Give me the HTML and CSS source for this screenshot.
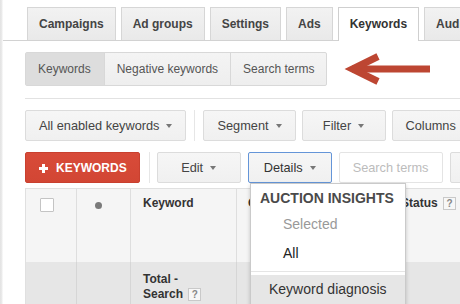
FILE: index.html
```html
<!DOCTYPE html>
<html>
<head>
<meta charset="utf-8">
<link rel="stylesheet" href="styles.css">
</head>
<body>
<div class="page">
  <div class="tabs">
    <div class="tab">Campaigns</div>
    <div class="tab">Ad groups</div>
    <div class="tab">Settings</div>
    <div class="tab">Ads</div>
    <div class="tab active">Keywords</div>
    <div class="tab">Audiences</div>
  </div>
  <div class="content">
    <div class="segmented">
      <div class="seg selected">Keywords</div>
      <div class="seg">Negative keywords</div>
      <div class="seg">Search terms</div>
    </div>
    <div class="rule"></div>
    <div class="toolbar">
      <div class="btn">All enabled keywords<span class="caret"></span></div>
      <div class="sep"></div>
      <div class="btn">Segment<span class="caret"></span></div>
      <div class="btn wide">Filter<span class="caret"></span></div>
      <div class="btn">Columns<span class="caret"></span></div>
    </div>
    <div class="toolbar row2">
      <div class="btn red"><svg class="plus" width="9" height="9" viewBox="0 0 9 9"><rect x="3" y="0" width="3" height="9" fill="#fff"/><rect x="0" y="3" width="9" height="3" fill="#fff"/></svg>KEYWORDS</div>
      <div class="sep sep2"></div>
      <div class="btn wide">Edit<span class="caret"></span></div>
      <div class="btn wide focus">Details<span class="caret"></span></div>
      <div class="btn disabled">Search terms</div>
      <div class="btn">Automate<span class="caret"></span></div>
    </div>
    <div class="table">
      <div class="trow head">
        <div class="cell c1"><span class="checkbox"></span></div>
        <div class="cell c2"><span class="dot"></span></div>
        <div class="cell c3">Keyword</div>
        <div class="cell c4">Campaign</div>
        <div class="cell c5">Status <span class="help">?</span></div>
        <div class="cell c6"></div>
      </div>
      <div class="trow total">
        <div class="cell c1"></div>
        <div class="cell c2"></div>
        <div class="cell c3">Total -<br>Search <span class="help">?</span></div>
        <div class="cell c4"></div>
        <div class="cell c5"></div>
        <div class="cell c6"></div>
      </div>
    </div>
  </div>

  <svg class="arrow" width="95" height="40" viewBox="0 0 95 40">
    <path d="M12 19 L90 19" stroke="#bd4632" stroke-width="7" fill="none"/>
    <path d="M38 6.5 L12.5 19 L38 31.5" stroke="#bd4632" stroke-width="7" fill="none" stroke-linejoin="miter"/>
  </svg>

  <div class="menu">
    <div class="menu-head">AUCTION INSIGHTS</div>
    <div class="menu-item sub muted">Selected</div>
    <div class="menu-item sub">All</div>
    <div class="menu-sep"></div>
    <div class="menu-item hover">Keyword diagnosis</div>
  </div>
</div>
</body>
</html>
```

FILE: styles.css
```css
* { box-sizing: border-box; }
html, body { margin: 0; padding: 0; background: #fff; }
body { font-family: "Liberation Sans", Arial, sans-serif; color: #444; }

.page {
  position: relative;
  width: 460px;
  height: 304px;
  overflow: hidden;
  background: linear-gradient(to right, #e2e2e2 0, #ececec 2px, #fff 3px);
}

/* tabs */
.tabs {
  display: flex;
  align-items: flex-end;
  gap: 5px;
  padding: 7px 0 0 24px;
  margin-left: 3px;
  border-bottom: 1px solid #d2d2d2;
  white-space: nowrap;
}
.tab {
  flex: none;
  height: 33px;
  line-height: 32px;
  padding: 0 11px;
  font-size: 12px;
  font-weight: bold;
  color: #444;
  border: 1px solid #d6d6d6;
  border-bottom: none;
  background: linear-gradient(#f2f2f2, #e9e9e9);
}
.tab.active {
  background: #fff;
  height: 34px;
  margin-bottom: -1px;
  border-color: #cfcfcf;
  color: #333;
}

.content { padding-left: 25px; }

/* segmented */
.segmented {
  display: inline-flex;
  margin-top: 11px;
  height: 34px;
  border: 1px solid #d8d8d8;
  border-radius: 2px;
  background: linear-gradient(#f4f4f4, #eeeeee);
}
.seg {
  padding: 0 12px;
  line-height: 32px;
  font-size: 12px;
  color: #555;
  border-left: 1px solid #d8d8d8;
  white-space: nowrap;
}
.seg:first-child { border-left: none; }
.seg.selected { background: #dddddd; padding: 0 13px 0 12px; }

.rule {
  margin-top: 12px;
  height: 1px;
  background: #e2e2e2;
}

/* toolbar */
.toolbar {
  display: flex;
  gap: 6px;
  margin-top: 11px;
  height: 31px;
  white-space: nowrap;
}
.row2 { gap: 7px; }
.btn {
  flex: none;
  display: flex;
  align-items: center;
  justify-content: center;
  height: 31px;
  padding: 0 13px;
  font-size: 12.75px;
  color: #444;
  border: 1px solid #dcdcdc;
  border-radius: 2px;
  background: linear-gradient(#f6f6f6, #f0f0f0);
}
.btn.wide { min-width: 84px; }
.caret {
  display: inline-block;
  width: 0;
  height: 0;
  margin-left: 7px;
  border-left: 3.5px solid transparent;
  border-right: 3.5px solid transparent;
  border-top: 4px solid #777;
}
.sep {
  flex: none;
  width: 1px;
  margin: 0 2px;
  background: #e6e6e6;
}
.sep2 { margin: 0 0 0 2px; }
.btn.red {
  background: linear-gradient(#d84b39, #d24634);
  border-color: #c9402f;
  color: #fff;
  font-size: 12px;
  font-weight: bold;
  justify-content: flex-start;
  padding: 0 12px 0 13px;
}
.plus { margin-right: 8px; margin-top: 2px; }
.btn.focus { border-color: #6495d8; color: #333; }
.btn.disabled {
  background: #fff;
  border-color: #e4e4e4;
  color: #bcbcbc;
}

/* table */
.table {
  margin-top: 5px;
  border-top: 1px solid #e0e0e0;
  border-left: 1px solid #e0e0e0;
  width: 600px;
}
.trow { display: flex; }
.trow.head { height: 73px; background: #f5f5f5; }
.trow.total { height: 60px; background: #e6e6e6; }
.cell {
  flex: none;
  border-right: 1px solid #dedede;
  font-size: 12px;
  font-weight: bold;
  color: #333;
  line-height: 15px;
}
.trow.total .cell { border-right-color: #d6d6d6; }
.c1 { width: 51px; padding: 9px 0 0 14px; }
.c2 { width: 54px; padding: 13px 0 0 18px; }
.c3 { width: 106px; padding: 7px 0 0 12px; }
.c4 { width: 153px; padding: 7px 0 0 11px; }
.c5 { width: 120px; padding: 7px 0 0 11px; }
.c6 { width: 110px; border-right: none; }
.trow.total .c3 { padding-top: 10px; }

.checkbox {
  display: block;
  width: 14px;
  height: 14px;
  border: 1px solid #c4c4c4;
  border-radius: 1px;
  background: #fff;
}
.dot {
  display: block;
  width: 7px;
  height: 7px;
  border-radius: 50%;
  background: #7a7a7a;
}
.help {
  display: inline-block;
  width: 13px;
  height: 13px;
  line-height: 11px;
  margin-left: 2px;
  text-align: center;
  font-size: 10px;
  font-weight: bold;
  color: #888;
  border: 1px solid #c9c9c9;
  background: #f7f7f7;
}

/* annotation arrow */
.arrow {
  position: absolute;
  left: 340px;
  top: 50px;
}

/* dropdown menu */
.menu {
  position: absolute;
  left: 250px;
  top: 183px;
  width: 156px;
  height: 140px;
  padding-top: 4px;
  background: #fff;
  border: 1px solid #cacaca;
  box-shadow: 0 2px 4px rgba(0, 0, 0, 0.2);
}
.menu-head {
  line-height: 20px;
  margin-bottom: 2px;
  padding-left: 9px;
  font-size: 14px;
  font-weight: bold;
  color: #4a4a4a;
  white-space: nowrap;
}
.menu-item {
  line-height: 29px;
  font-size: 14px;
  color: #222;
  padding-left: 18px;
  white-space: nowrap;
}
.menu-item.sub { padding-left: 32px; }
.menu-item.muted { color: #999; }
.menu-sep {
  height: 1px;
  margin: 3px 0;
  background: #e5e5e5;
}
.menu-item.hover { background: #e6e6e6; color: #333; }
```
